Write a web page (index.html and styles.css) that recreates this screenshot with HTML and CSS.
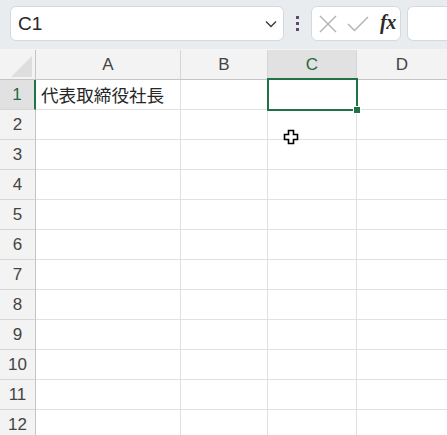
FILE: index.html
```html
<!DOCTYPE html>
<html lang="ja">
<head>
<meta charset="utf-8">
<title>Sheet</title>
<link rel="stylesheet" href="styles.css">
</head>
<body>
<div class="app">
  <div class="toolbar">
    <div class="namebox">
      <span class="ref">C1</span>
      <svg class="chev" width="12" height="8" viewBox="0 0 12 8"><path d="M1 1.5 L6 6.5 L11 1.5" fill="none" stroke="#3a3a3a" stroke-width="1.4"/></svg>
    </div>
    <div class="dots"><i></i><i></i><i></i></div>
    <div class="fbtns">
      <svg class="ico" width="18" height="18" viewBox="0 0 18 18"><path d="M1 1 L17 17 M17 1 L1 17" stroke="#b5b5b5" stroke-width="1.5" fill="none"/></svg>
      <svg class="ico" width="22" height="16" viewBox="0 0 22 16"><path d="M1 8 L7.5 14.5 L21 1" stroke="#b5b5b5" stroke-width="1.5" fill="none"/></svg>
      <span class="fx">fx</span>
    </div>
    <div class="finput"></div>
  </div>
  <div class="sheet">
    <div class="grid">
      <div class="hd corner"><svg width="22" height="21" viewBox="0 0 22 21"><path d="M21 0 L21 21 L0 21 Z" fill="#dedede"/></svg></div>
      <div class="hd col">A</div>
      <div class="hd col">B</div>
      <div class="hd col sel">C</div>
      <div class="hd col last">D</div>

      <div class="hd row sel">1</div><div class="c txt">代表取締役社長</div><div class="c"></div><div class="c"></div><div class="c last"></div>
      <div class="hd row">2</div><div class="c"></div><div class="c"></div><div class="c"></div><div class="c last"></div>
      <div class="hd row">3</div><div class="c"></div><div class="c"></div><div class="c"></div><div class="c last"></div>
      <div class="hd row">4</div><div class="c"></div><div class="c"></div><div class="c"></div><div class="c last"></div>
      <div class="hd row">5</div><div class="c"></div><div class="c"></div><div class="c"></div><div class="c last"></div>
      <div class="hd row">6</div><div class="c"></div><div class="c"></div><div class="c"></div><div class="c last"></div>
      <div class="hd row">7</div><div class="c"></div><div class="c"></div><div class="c"></div><div class="c last"></div>
      <div class="hd row">8</div><div class="c"></div><div class="c"></div><div class="c"></div><div class="c last"></div>
      <div class="hd row">9</div><div class="c"></div><div class="c"></div><div class="c"></div><div class="c last"></div>
      <div class="hd row">10</div><div class="c"></div><div class="c"></div><div class="c"></div><div class="c last"></div>
      <div class="hd row">11</div><div class="c"></div><div class="c"></div><div class="c"></div><div class="c last"></div>
      <div class="hd row">12</div><div class="c"></div><div class="c"></div><div class="c"></div><div class="c last"></div>
    </div>
    <div class="selection"><span class="handle"></span></div>
    <svg class="cursor" width="16" height="16" viewBox="0 0 16 16"><path d="M5.5 1.5 H10.5 V5.5 H14.5 V10.5 H10.5 V14.5 H5.5 V10.5 H1.5 V5.5 H5.5 Z" fill="#fff" stroke="#000" stroke-width="1.6"/></svg>
  </div>
</div>
</body>
</html>
```

FILE: styles.css
```css
html, body {
  margin: 0;
  padding: 0;
  background: #ffffff;
}
.app {
  width: 447px;
  height: 435px;
  overflow: hidden;
  font-family: "Liberation Sans", "Noto Sans", Arial, sans-serif;
}
.toolbar {
  height: 50px;
  box-sizing: border-box;
  background: #e9ecef;
  display: flex;
  align-items: flex-start;
  padding: 6px 0 0 10px;
  border-bottom: 1px solid #f4f5f6;
}
.namebox {
  width: 274px;
  height: 35px;
  box-sizing: border-box;
  background: #ffffff;
  border: 1px solid #d5d8dc;
  border-radius: 6px;
  display: flex;
  align-items: center;
  justify-content: space-between;
  padding: 0 6px 0 7px;
}
.ref {
  font-size: 19px;
  color: #262626;
  padding-top: 1px;
}
.chev {
  display: block;
}
.dots {
  width: 27px;
  height: 35px;
  display: flex;
  flex-direction: column;
  align-items: center;
  justify-content: center;
  gap: 3px;
}
.dots i {
  display: block;
  width: 3px;
  height: 3px;
  background: #5a4c6a;
}
.fbtns {
  width: 90px;
  height: 35px;
  box-sizing: border-box;
  background: #ffffff;
  border: 1px solid #d5d8dc;
  border-radius: 6px;
  display: flex;
  align-items: center;
  padding: 0 0 0 7px;
  gap: 10px;
}
.ico {
  display: block;
}
.fx {
  font-family: "Liberation Serif", "DejaVu Serif", serif;
  font-style: italic;
  font-weight: bold;
  font-size: 20px;
  color: #2b2b2b;
  letter-spacing: -0.5px;
  margin-left: 1px;
  padding-bottom: 3px;
}
.finput {
  margin-left: 6px;
  flex: 1;
  height: 35px;
  box-sizing: border-box;
  background: #ffffff;
  border: 1px solid #d5d8dc;
  border-right: none;
  border-radius: 6px 0 0 6px;
}
.sheet {
  position: relative;
}
.grid {
  display: grid;
  grid-template-columns: 36px 145px 87px 89px 90px;
  grid-template-rows: 30px;
  grid-auto-rows: 30px;
}
.hd {
  box-sizing: border-box;
  background: #f3f3f3;
  color: #444444;
  font-size: 17px;
  display: flex;
  align-items: center;
  justify-content: center;
}
.col {
  border-right: 1px solid #d6d6d6;
  border-bottom: 1px solid #c4c4c4;
}
.col.last {
  border-right: none;
}
.corner {
  border-right: 1px solid #c4c4c4;
  border-bottom: 1px solid #c4c4c4;
  justify-content: flex-end;
  align-items: flex-end;
  padding: 0 2px 2px 0;
}
.corner svg {
  display: block;
}
.row {
  border-right: 1px solid #c4c4c4;
  border-bottom: 1px solid #d6d6d6;
}
.hd.sel {
  background: #e1e1e1;
  color: #1d6b40;
}
.row.sel {
  border-right: 2px solid #217346;
}
.c {
  box-sizing: border-box;
  border-right: 1px solid #e1e1e1;
  border-bottom: 1px solid #e1e1e1;
}
.c.last {
  border-right: none;
}
.txt {
  font-family: "Noto Sans CJK JP", "Noto Sans CJK SC", sans-serif;
  font-size: 17.6px;
  color: #262626;
  padding-left: 5px;
  display: flex;
  align-items: center;
  white-space: nowrap;
}
.selection {
  position: absolute;
  left: 267px;
  top: 28px;
  width: 91px;
  height: 33px;
  box-sizing: border-box;
  border: 2px solid #217346;
}
.handle {
  position: absolute;
  right: -4px;
  bottom: -4px;
  width: 6px;
  height: 6px;
  background: #217346;
  box-shadow: 0 0 0 1px #ffffff;
}
.cursor {
  position: absolute;
  left: 283px;
  top: 79px;
}
```
